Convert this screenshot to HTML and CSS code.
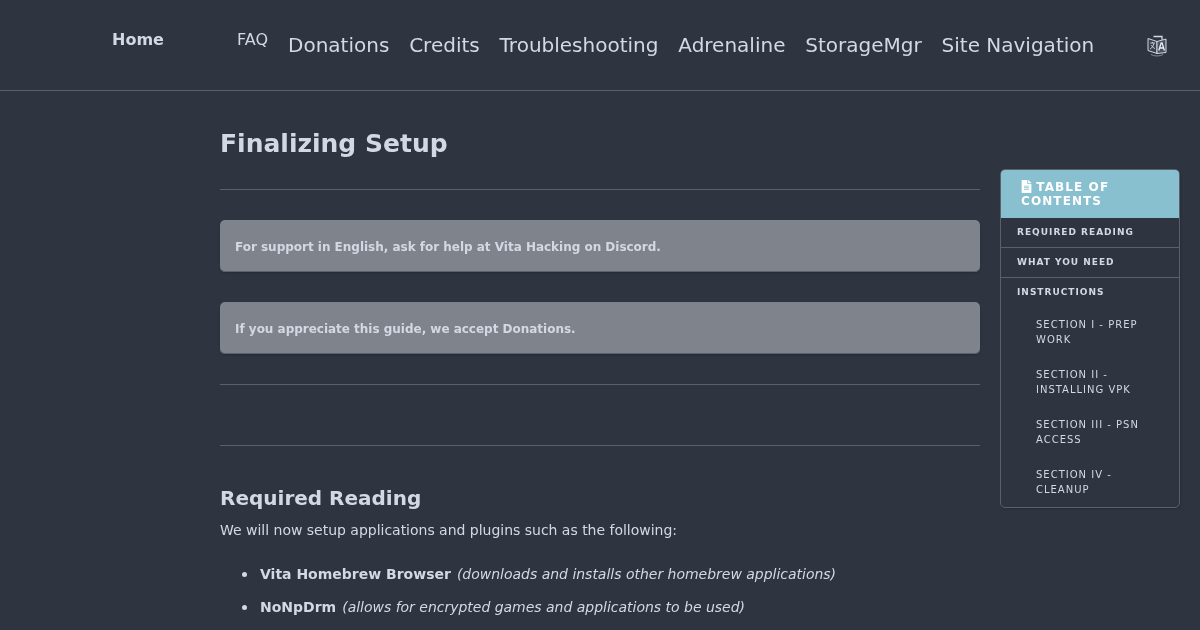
FILE: index.html
```html
<!DOCTYPE html>
<html lang="en">
<head>
<meta charset="utf-8">
<title>Finalizing Setup</title>
<link rel="stylesheet" href="styles.css">
</head>
<body>
<header class="masthead">
  <a class="home" href="#">Home</a>
  <a class="faq" href="#">FAQ</a>
  <nav class="links">
    <a href="#">Donations</a>
    <a href="#">Credits</a>
    <a href="#">Troubleshooting</a>
    <a href="#">Adrenaline</a>
    <a href="#">StorageMgr</a>
    <a href="#">Site Navigation</a>
  </nav>
  <svg class="lang" viewBox="0 0 20 22" width="20" height="22" aria-hidden="true">
    <path d="M1 3.500 L10 6.500 V18.500 L1 15.500 Z" fill="#3a404d" stroke="#d3d9e4" stroke-width="1"/>
    <path d="M10 6.500 L19 4 V17.500 L10 18.500 Z" fill="#4a505c" stroke="#d3d9e4" stroke-width="1"/>
    <path d="M6.500 1.500 L15 1.500 V4.800" stroke="#d3d9e4" stroke-width="1.300" fill="none"/>
    <path d="M3.200 8 H8 M5.500 7 V8 M7 8.200 C6.500 11 5 13 3 14 M4.500 10 C5 11.500 6.500 13 8 13.600" stroke="#d3d9e4" stroke-width=".9" fill="none"/>
    <path d="M11.800 15.500 L14.200 7.800 H15 L17.400 15.500 M12.800 13 H16.400" stroke="#eceff4" stroke-width="1.300" fill="none"/>
    <path d="M4 19.500 C7 21.500 13 21.500 16 19.500" stroke="#9aa0ac" stroke-width=".8" fill="none"/>
  </svg>
</header>
<div class="page">
  <main class="content">
    <h1 class="title">Finalizing Setup</h1>
    <hr class="rule rule-first">
    <p class="notice">For support in English, ask for help at <a href="#">Vita Hacking on Discord</a>.</p>
    <p class="notice">If you appreciate this guide, we accept <a href="#">Donations</a>.</p>
    <hr class="rule rule-mid">
    <hr class="rule rule-last">
    <h2 class="section">Required Reading</h2>
    <p class="lead">We will now setup applications and plugins such as the following:</p>
    <ul class="apps">
      <li><strong>Vita Homebrew Browser</strong> <em>(downloads and installs other homebrew applications)</em></li>
      <li><strong>NoNpDrm</strong> <em>(allows for encrypted games and applications to be used)</em></li>
    </ul>
  </main>
  <aside class="toc">
    <h4 class="toc-head"><svg class="toc-icon" viewBox="0 0 384 512" width="11" height="13" aria-hidden="true"><path fill="#fff" d="M224 136V0H24C10.700 0 0 10.700 0 24v464c0 13.300 10.700 24 24 24h336c13.300 0 24-10.700 24-24V160H248c-13.200 0-24-10.800-24-24zm64 236c0 6.600-5.400 12-12 12H108c-6.600 0-12-5.400-12-12v-8c0-6.600 5.400-12 12-12h168c6.600 0 12 5.400 12 12v8zm0-64c0 6.600-5.400 12-12 12H108c-6.600 0-12-5.400-12-12v-8c0-6.600 5.400-12 12-12h168c6.600 0 12 5.400 12 12v8zm0-72v8c0 6.600-5.400 12-12 12H108c-6.600 0-12-5.400-12-12v-8c0-6.600 5.400-12 12-12h168c6.600 0 12 5.400 12 12zm96-114.100v6.100H256V0h6.100c6.400 0 12.500 2.500 17 7l97.900 98c4.500 4.500 7 10.600 7 16.900z"/></svg> Table of Contents</h4>
    <ul class="toc-list">
      <li class="toc-top"><a href="#">Required Reading</a></li>
      <li class="toc-top"><a href="#">What You Need</a></li>
      <li class="toc-top toc-group"><a href="#">Instructions</a>
        <ul class="toc-sub">
          <li><a href="#">Section I - Prep Work</a></li>
          <li><a href="#">Section II - Installing VPK</a></li>
          <li><a href="#">Section III - PSN Access</a></li>
          <li><a href="#">Section IV - Cleanup</a></li>
        </ul>
      </li>
    </ul>
  </aside>
</div>
</body>
</html>
```
FILE: styles.css
```css
html, body { margin: 0; padding: 0; }
body {
  height: 630px;
  overflow: hidden;
  background: #2e3440;
  color: #d3d9e4;
  font-family: "DejaVu Sans", sans-serif;
  font-size: 14px;
}
a { color: inherit; text-decoration: none; }

.masthead, .page { will-change: transform; }
.masthead {
  height: 90px;
  border-bottom: 1px solid #5b606b;
  display: flex;
  align-items: flex-start;
  padding-left: 112px;
}
.home { font-weight: 700; font-size: 16px; line-height: 19px; margin-top: 30px; width: 125px; }
.faq { font-size: 16px; line-height: 19px; margin-top: 30px; width: 51px; }
.links { display: flex; gap: 19.850px; font-size: 20px; line-height: 25px; margin-top: 33px; }
.lang { margin: 35px 0 0 53px; }

.page { display: flex; align-items: flex-start; padding-left: 220px; }
.content { width: 760px; flex: none; }
.title { margin: 0; padding-top: 38px; font-size: 25px; line-height: 30px; font-weight: 700; }
.rule { border: 0; border-top: 1px solid #5b606b; margin: 0; }
.rule-first { margin-top: 30px; }
.rule-mid { margin-top: 30px; }
.rule-last { margin-top: 60px; }
.notice {
  margin: 30px 0 0;
  height: 52px;
  box-sizing: border-box;
  padding: 0 15px;
  line-height: 55px;
  letter-spacing: -.015px;
  background: #7e838c;
  border-radius: 5px;
  box-shadow: inset 0 -1px 0 #5b606b, 0 1px 2px rgba(0, 0, 0, .2);
  font-size: 12px;
  font-weight: 700;
}
.section { margin: 0; padding-top: 40px; font-size: 20px; line-height: 25px; font-weight: 700; }
.lead { margin: 8px 0 0; line-height: 22px; letter-spacing: -.015px; }
.apps { margin: 22px 0 0; padding: 0 0 0 40px; list-style: none; }
.apps li { line-height: 22px; margin-bottom: 11px; display: flex; align-items: center; gap: 6px; position: relative; }
.apps em { letter-spacing: -.015px; }
.apps li::before {
  content: "";
  position: absolute;
  left: -18px;
  top: 9px;
  width: 5px;
  height: 5px;
  border-radius: 50%;
  background: #d3d9e4;
}

.toc {
  flex: none;
  width: 180px;
  box-sizing: border-box;
  margin: 78px 0 0 20px;
  border: 1px solid #5b606b;
  border-radius: 5px;
  box-shadow: 1px 1px 2px rgba(0, 0, 0, .15);
  overflow: hidden;
}
.toc-head {
  margin: 0;
  padding: 10px 20px;
  height: 48px;
  box-sizing: border-box;
  background: #88c0d0;
  color: #fff;
  font-size: 12px;
  line-height: 14px;
  font-weight: 700;
  letter-spacing: 1.100px;
  text-transform: uppercase;
}
.toc-icon { vertical-align: -2px; margin-right: -1px; }
.toc-list, .toc-sub { list-style: none; margin: 0; padding: 0; }
.toc-top { border-bottom: 1px solid #5b606b; }
.toc-top > a {
  display: block;
  padding: 7px 16px 8px;
  line-height: 14px;
  font-size: 9px;
  font-weight: 700;
  letter-spacing: 1px;
  text-transform: uppercase;
}
.toc-group { border-bottom: 0; }
.toc-sub { padding: 2px 0 0; }
.toc-sub li a {
  display: block;
  padding: 8px 30px 12px 35px;
  line-height: 15px;
  font-size: 10px;
  letter-spacing: 1px;
  text-transform: uppercase;
}
.toc-sub li:last-child a { padding-bottom: 10px; }
```
